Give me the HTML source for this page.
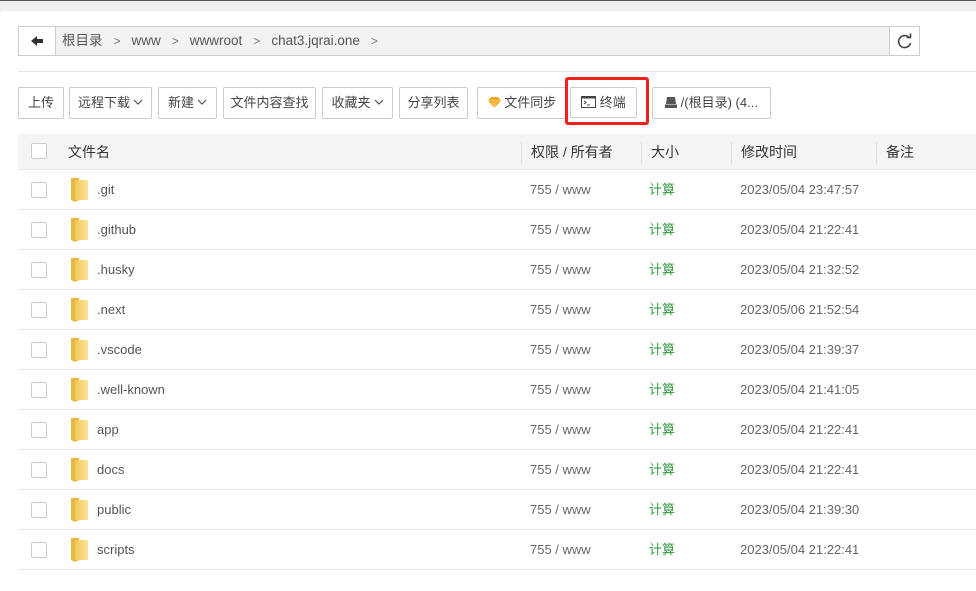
<!DOCTYPE html>
<html><head><meta charset="utf-8"><style>
*{box-sizing:border-box;margin:0;padding:0}
body{width:976px;height:579px;overflow:hidden;background:#f0f0f0;font-family:"Liberation Sans","Noto Sans CJK SC",sans-serif;font-size:13px;color:#555;position:relative;line-height:16px}
.top{position:absolute;left:0;top:0;width:976px;height:1px;background:#555}
.panel{position:absolute;left:0;top:11px;width:976px;height:580px;background:#fff;border-radius:4px 0 0 0}
.abs{position:absolute}
.bc{left:18px;top:26px;width:902px;height:30px;border:1px solid #ccc;background:#f2f2f2}
.back{left:18px;top:26px;width:38px;height:30px;border:1px solid #ccc;background:#fff}
.refresh{left:889px;top:26px;width:31px;height:30px;border:1px solid #ccc;background:#fff}
.crumbs{left:62px;top:33px;font-size:13.5px;line-height:16px;color:#555;white-space:nowrap}
.crumbs span.s{margin:0 11px;color:#777;font-size:12px}
.hr{left:18px;top:71px;width:958px;height:1px;background:#e6e6e6}
.btn{top:87px;height:32px;border:1px solid #ccc;background:#fff;line-height:30px;text-align:center;font-size:13px;color:#444;white-space:nowrap;border-radius:2px}
.chev{display:inline-block;width:10px;height:6px;margin-left:3px;vertical-align:2px}
.red{left:565px;top:77px;width:84px;height:48px;border:3px solid #f0201a;border-radius:3px}
.thead{left:18px;top:134px;width:958px;height:36px;background:#f4f4f4;border-bottom:1px solid #e6e6e6}
.th{top:144px;font-size:14px;color:#333;line-height:16px}
.vl{top:142px;width:1px;height:22px;background:#ddd}
.cb{width:16px;height:16px;border:1px solid #ccc;background:#fff;border-radius:2px}
.row{left:18px;width:958px;height:40px;border-bottom:1px solid #e6e6e6}
.fic{position:absolute;left:71px}
.r{position:absolute;font-size:13px;line-height:16px;color:#666}
.name{color:#555}
.g{color:#2e9a3e}
</style></head><body>
<div class="top"></div>
<div class="panel"></div>
<div class="abs bc"></div>
<div class="abs back"><svg width="36" height="28" viewBox="0 0 36 28"><path d="M12 14 L18 9 V12 H24 V16 H18 V19 Z" fill="#333"/></svg></div>
<div class="abs refresh"><svg width="29" height="28" viewBox="0 0 29 28"><path d="M19.5 11 A6 6 0 1 0 20.5 16" fill="none" stroke="#444" stroke-width="1.6"/><path d="M16.5 10.5 L20.5 10.5 L20.5 6.5" fill="none" stroke="#444" stroke-width="1.6"/></svg></div>
<div class="abs crumbs">根目录<span class="s">&gt;</span>www<span class="s">&gt;</span>wwwroot<span class="s">&gt;</span>chat3.jqrai.one<span class="s">&gt;</span></div>
<div class="abs hr"></div>

<div class="abs btn" style="left:18px;width:46px">上传</div>
<div class="abs btn" style="left:69px;width:83px">远程下载<svg class="chev" viewBox="0 0 10 6"><path d="M1 1 L5 5 L9 1" fill="none" stroke="#555" stroke-width="1.2"/></svg></div>
<div class="abs btn" style="left:158px;width:59px">新建<svg class="chev" viewBox="0 0 10 6"><path d="M1 1 L5 5 L9 1" fill="none" stroke="#555" stroke-width="1.2"/></svg></div>
<div class="abs btn" style="left:223px;width:93px">文件内容查找</div>
<div class="abs btn" style="left:322px;width:71px">收藏夹<svg class="chev" viewBox="0 0 10 6"><path d="M1 1 L5 5 L9 1" fill="none" stroke="#555" stroke-width="1.2"/></svg></div>
<div class="abs btn" style="left:399px;width:69px">分享列表</div>
<div class="abs btn" style="left:477px;width:90px"><svg width="13" height="11" viewBox="0 0 13 11" style="vertical-align:-1px"><path d="M3 0 H10 L13 3.5 L6.5 11 L0 3.5 Z" fill="#f5a623"/><path d="M0 3.5 H13 M4.5 3.5 L6.5 11 L8.5 3.5" stroke="#ffd27a" stroke-width="0.8" fill="none"/></svg> 文件同步</div>
<div class="abs btn" style="left:570px;width:67px;height:31px;line-height:29px"><svg width="15" height="12" viewBox="0 0 15 12" style="vertical-align:-1px"><rect x="0.5" y="0.5" width="14" height="11" fill="none" stroke="#444"/><rect x="0.5" y="0.5" width="14" height="2" fill="#444"/><path d="M3 5 L5 6.5 L3 8 M6 9 H9" stroke="#444" fill="none"/></svg> 终端</div>
<div class="abs red"></div>
<div class="abs btn" style="left:652px;width:119px"><svg width="12" height="11" viewBox="0 0 12 11" style="vertical-align:-1px"><path d="M2 0 H10 L11 7 H1 Z" fill="#555"/><rect x="0" y="7.5" width="12" height="3.5" fill="#555"/></svg> /(根目录) (4...</div>

<div class="abs thead"></div>
<div class="abs cb" style="left:31px;top:143px"></div>
<div class="abs th" style="left:68px">文件名</div>
<div class="abs vl" style="left:521px"></div><div class="abs th" style="left:531px">权限 / 所有者</div>
<div class="abs vl" style="left:641px"></div><div class="abs th" style="left:651px">大小</div>
<div class="abs vl" style="left:731px"></div><div class="abs th" style="left:741px">修改时间</div>
<div class="abs vl" style="left:876px"></div><div class="abs th" style="left:886px">备注</div>

<div class="abs row" style="top:170px"></div>
<div class="abs row" style="top:210px"></div>
<div class="abs row" style="top:250px"></div>
<div class="abs row" style="top:290px"></div>
<div class="abs row" style="top:330px"></div>
<div class="abs row" style="top:370px"></div>
<div class="abs row" style="top:410px"></div>
<div class="abs row" style="top:450px"></div>
<div class="abs row" style="top:490px"></div>
<div class="abs row" style="top:530px"></div>

<svg class="abs" style="left:0;top:0" width="1" height="1">
<defs><linearGradient id="f" x1="0" x2="1"><stop offset="0" stop-color="#f3c75a"/><stop offset="1" stop-color="#fbe39a"/></linearGradient>
<g id="fi"><path d="M0 0 H8 L8 22 L4 24 L0 22 Z" fill="#e9b840"/><path d="M4 2 H17 V22 H4 Z" fill="url(#f)"/></g></defs>
</svg>

<div class="abs cb" style="left:31px;top:182px"></div><svg class="fic" style="top:178px" width="18" height="25"><use href="#fi"/></svg><div class="r name" style="left:97px;top:182px">.git</div><div class="r" style="left:530px;top:182px">755 / www</div><div class="r g" style="left:649px;top:182px">计算</div><div class="r" style="left:740px;top:182px">2023/05/04 23:47:57</div>
<div class="abs cb" style="left:31px;top:222px"></div><svg class="fic" style="top:218px" width="18" height="25"><use href="#fi"/></svg><div class="r name" style="left:97px;top:222px">.github</div><div class="r" style="left:530px;top:222px">755 / www</div><div class="r g" style="left:649px;top:222px">计算</div><div class="r" style="left:740px;top:222px">2023/05/04 21:22:41</div>
<div class="abs cb" style="left:31px;top:262px"></div><svg class="fic" style="top:258px" width="18" height="25"><use href="#fi"/></svg><div class="r name" style="left:97px;top:262px">.husky</div><div class="r" style="left:530px;top:262px">755 / www</div><div class="r g" style="left:649px;top:262px">计算</div><div class="r" style="left:740px;top:262px">2023/05/04 21:32:52</div>
<div class="abs cb" style="left:31px;top:302px"></div><svg class="fic" style="top:298px" width="18" height="25"><use href="#fi"/></svg><div class="r name" style="left:97px;top:302px">.next</div><div class="r" style="left:530px;top:302px">755 / www</div><div class="r g" style="left:649px;top:302px">计算</div><div class="r" style="left:740px;top:302px">2023/05/06 21:52:54</div>
<div class="abs cb" style="left:31px;top:342px"></div><svg class="fic" style="top:338px" width="18" height="25"><use href="#fi"/></svg><div class="r name" style="left:97px;top:342px">.vscode</div><div class="r" style="left:530px;top:342px">755 / www</div><div class="r g" style="left:649px;top:342px">计算</div><div class="r" style="left:740px;top:342px">2023/05/04 21:39:37</div>
<div class="abs cb" style="left:31px;top:382px"></div><svg class="fic" style="top:378px" width="18" height="25"><use href="#fi"/></svg><div class="r name" style="left:97px;top:382px">.well-known</div><div class="r" style="left:530px;top:382px">755 / www</div><div class="r g" style="left:649px;top:382px">计算</div><div class="r" style="left:740px;top:382px">2023/05/04 21:41:05</div>
<div class="abs cb" style="left:31px;top:422px"></div><svg class="fic" style="top:418px" width="18" height="25"><use href="#fi"/></svg><div class="r name" style="left:97px;top:422px">app</div><div class="r" style="left:530px;top:422px">755 / www</div><div class="r g" style="left:649px;top:422px">计算</div><div class="r" style="left:740px;top:422px">2023/05/04 21:22:41</div>
<div class="abs cb" style="left:31px;top:462px"></div><svg class="fic" style="top:458px" width="18" height="25"><use href="#fi"/></svg><div class="r name" style="left:97px;top:462px">docs</div><div class="r" style="left:530px;top:462px">755 / www</div><div class="r g" style="left:649px;top:462px">计算</div><div class="r" style="left:740px;top:462px">2023/05/04 21:22:41</div>
<div class="abs cb" style="left:31px;top:502px"></div><svg class="fic" style="top:498px" width="18" height="25"><use href="#fi"/></svg><div class="r name" style="left:97px;top:502px">public</div><div class="r" style="left:530px;top:502px">755 / www</div><div class="r g" style="left:649px;top:502px">计算</div><div class="r" style="left:740px;top:502px">2023/05/04 21:39:30</div>
<div class="abs cb" style="left:31px;top:542px"></div><svg class="fic" style="top:538px" width="18" height="25"><use href="#fi"/></svg><div class="r name" style="left:97px;top:542px">scripts</div><div class="r" style="left:530px;top:542px">755 / www</div><div class="r g" style="left:649px;top:542px">计算</div><div class="r" style="left:740px;top:542px">2023/05/04 21:22:41</div>
</body></html>
